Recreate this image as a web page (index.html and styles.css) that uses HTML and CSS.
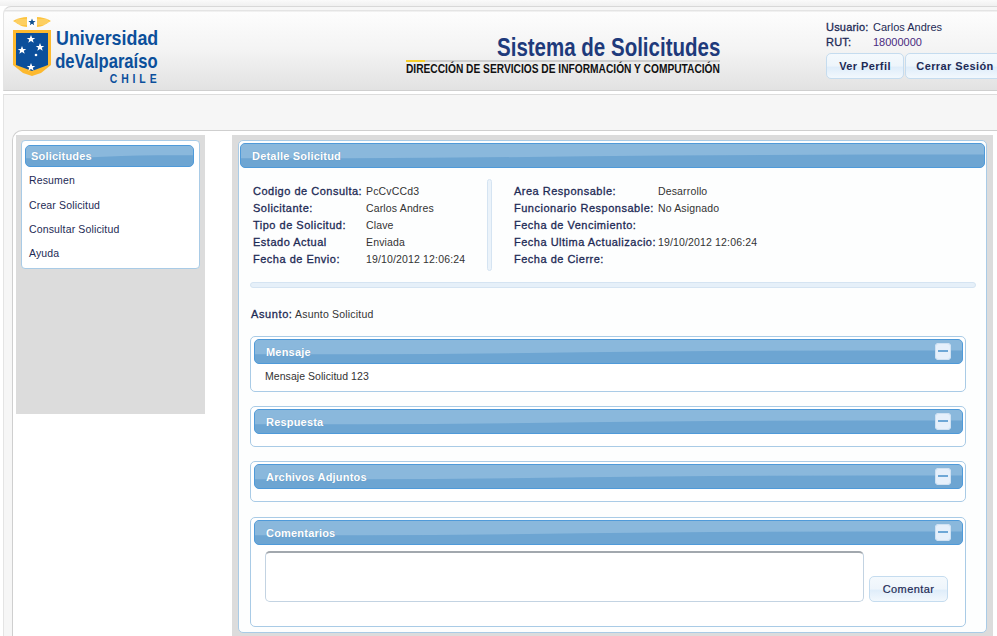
FILE: index.html
```html
<!DOCTYPE html>
<html lang="es">
<head>
    <meta charset="UTF-8">
    <title>Sistema de Solicitudes</title>
    <link rel="stylesheet" href="styles.css">
</head>
<body>

<svg class="defs" width="0" height="0">
    <symbol id="wave" viewBox="0 0 700 26" preserveAspectRatio="none">
        <path d="M0 0H700V12C600 12 500 12 400 13C300 14 200 16 100 16C60 16 30 16 0 16Z" fill="#8ab8dc"/>
    </symbol>
</svg>

<header class="header">
    <div class="logo">
        <svg class="escudo" width="38" height="62" viewBox="0 0 38 62">
            <g fill="#fdc43f">
                <path d="M0 5C5 2 10 1 14 1V11C9 11 5 8 0 5Z"/>
                <path d="M38 5C33 2 28 1 24 1V11C29 11 33 8 38 5Z"/>
            </g>
            <g stroke="#fff2c8" stroke-width=".5">
                <path d="M3 4H14M2 6H14M5 8H14"/>
                <path d="M24 4H35M24 6H36M24 8H33"/>
            </g>
            <circle cx="19" cy="6" r="5" fill="#fff"/>
            <path d="M19 2.5L20 5.1H22.6L20.5 6.7L21.2 9.3L19 7.8L16.8 9.3L17.5 6.7L15.4 5.1H18Z" fill="#10508f"/>
            <path d="M0 14H38V49L28 57L19 60L10 57L0 49Z" fill="#fdb92e"/>
            <path d="M3 17H35V49L19 55L3 49Z" fill="#0b4f9b"/>
            <g fill="#fff">
                <path d="M18 19L19.2 21.9H22.3L19.8 23.8L20.7 26.8L18 25L15.3 26.8L16.2 23.8L13.7 21.9H16.8Z"/>
                <path d="M9 30L10.2 32.9H13.3L10.8 34.8L11.7 37.8L9 36L6.3 37.8L7.2 34.8L4.7 32.9H7.8Z"/>
                <path d="M27 27L28.2 29.9H31.3L28.8 31.8L29.7 34.8L27 33L24.3 34.8L25.2 31.8L22.7 29.9H25.8Z"/>
                <path d="M18 47L19.2 49.9H22.3L19.8 51.8L20.7 54.8L18 53L15.3 54.8L16.2 51.8L13.7 49.9H16.8Z"/>
                <circle cx="23" cy="39" r="1.3"/>
            </g>
        </svg>
        <div class="logo-text">
            <div class="logo-line"><span class="logo-u">Universidad</span></div>
            <div class="logo-line"><span class="logo-d">deValparaíso</span></div>
            <div class="logo-chile"><span>CHILE</span></div>
        </div>
    </div>
    <div class="titulo">
        <h1><span>Sistema de Solicitudes</span></h1>
        <div class="subtitulo"><span>DIRECCIÓN DE SERVICIOS DE INFORMACIÓN Y COMPUTACIÓN</span></div>
    </div>
    <div class="usuario">
        <div class="usuario-fila"><b>Usuario:</b><span>Carlos Andres</span></div>
        <div class="usuario-fila"><b>RUT:</b><span class="rut">18000000</span></div>
        <div class="usuario-botones">
            <button type="button" class="boton">Ver Perfil</button>
            <button type="button" class="boton boton-sesion">Cerrar Sesión</button>
        </div>
    </div>
</header>

<div class="cuerpo">
    <div class="franja"></div>

    <div class="contenido">
        <aside class="lateral">
            <div class="menu">
                <div class="barra barra-menu">
                    <svg class="wave"><use href="#wave"/></svg>
                    <span>Solicitudes</span>
                </div>
                <a href="#">Resumen</a>
                <a href="#">Crear Solicitud</a>
                <a href="#">Consultar Solicitud</a>
                <a href="#">Ayuda</a>
            </div>
        </aside>

        <main class="principal">
            <div class="panel">
                <div class="barra barra-detalle">
                    <svg class="wave"><use href="#wave"/></svg>
                    <span>Detalle Solicitud</span>
                </div>

                <div class="datos">
                    <dl class="datos-col col-izq">
                        <dt>Codigo de Consulta:</dt><dd>PcCvCCd3</dd>
                        <dt>Solicitante:</dt><dd>Carlos Andres</dd>
                        <dt>Tipo de Solicitud:</dt><dd>Clave</dd>
                        <dt>Estado Actual</dt><dd>Enviada</dd>
                        <dt>Fecha de Envio:</dt><dd>19/10/2012 12:06:24</dd>
                    </dl>
                    <div class="divisor"></div>
                    <dl class="datos-col col-der">
                        <dt>Area Responsable:</dt><dd>Desarrollo</dd>
                        <dt>Funcionario Responsable:</dt><dd>No Asignado</dd>
                        <dt>Fecha de Vencimiento:</dt><dd></dd>
                        <dt>Fecha Ultima Actualizacio:</dt><dd>19/10/2012 12:06:24</dd>
                        <dt>Fecha de Cierre:</dt><dd></dd>
                    </dl>
                </div>

                <div class="separador"></div>

                <p class="asunto"><b>Asunto:</b> Asunto Solicitud</p>

                <section class="caja caja-mensaje">
                    <div class="barra">
                        <svg class="wave"><use href="#wave"/></svg>
                        <span>Mensaje</span>
                        <i class="menos"></i>
                    </div>
                    <p class="caja-texto">Mensaje Solicitud 123</p>
                </section>

                <section class="caja caja-vacia">
                    <div class="barra">
                        <svg class="wave"><use href="#wave"/></svg>
                        <span>Respuesta</span>
                        <i class="menos"></i>
                    </div>
                </section>

                <section class="caja caja-vacia">
                    <div class="barra">
                        <svg class="wave"><use href="#wave"/></svg>
                        <span>Archivos Adjuntos</span>
                        <i class="menos"></i>
                    </div>
                </section>

                <section class="caja caja-comentarios">
                    <div class="barra">
                        <svg class="wave"><use href="#wave"/></svg>
                        <span>Comentarios</span>
                        <i class="menos"></i>
                    </div>
                    <form class="comentar">
                        <textarea></textarea>
                        <button type="button" class="boton boton-comentar">Comentar</button>
                    </form>
                </section>
            </div>
        </main>
    </div>
</div>

</body>
</html>
```

FILE: styles.css
```css
* {
    box-sizing: border-box;
}

html, body {
    height: 636px;
    overflow: hidden;
}

body {
    margin: 0;
    padding-top: 6px;
    font-family: "Liberation Sans", Arial, sans-serif;
    font-size: 11px;
    color: #1d2a55;
    background: linear-gradient(#fafafa, #f0f0f0 6px, #fff 6px);
}

.defs {
    display: block;
}

/* Cabecera */
.header {
    display: flex;
    height: 85px;
    margin-left: 3px;
    border-top: 1px solid #d8d8d8;
    border-bottom: 1px solid #cfcfcf;
    border-left: 1px solid #e4e4e4;
    border-top-left-radius: 8px;
    background: linear-gradient(#f6f6f6 0, #f6f6f6 3px, #e4e4e4 3px, #e4e4e4 4px, #fdfdfd 5px, #f4f4f4 50%, #e2e2e2 100%);
}

.logo {
    display: flex;
    width: 145px;
    margin-left: 9px;
    padding-top: 9px;
    flex: none;
}

.escudo {
    flex: none;
}

.logo-text {
    width: 102px;
    margin-left: 5px;
    padding-top: 10px;
    color: #0b4f9b;
    font-weight: 700;
}

.logo-line,
.logo-chile,
.titulo h1,
.subtitulo {
    display: flex;
    justify-content: flex-end;
    white-space: nowrap;
}

.logo-line {
    height: 23px;
    font-size: 21px;
    line-height: 23px;
}

.logo-line span,
.logo-chile span,
.titulo h1 span,
.subtitulo span {
    flex: none;
    transform-origin: right center;
}

.logo-u {
    transform: scaleX(.85);
}

.logo-d {
    transform: scaleX(.79);
}

.logo-chile {
    margin-right: -2px;
    font-size: 13px;
    line-height: 13px;
    letter-spacing: 4.9px;
}

.logo-chile span {
    transform: scaleX(.8);
}

.titulo {
    width: 314px;
    margin-left: 248px;
    padding-top: 27px;
    flex: none;
    font-weight: 700;
}

.titulo h1 {
    margin: 0;
    font-size: 25px;
    line-height: 26px;
    color: #1e3a7b;
}

.titulo h1 span {
    transform: scaleX(.82);
}

.subtitulo {
    height: 17px;
    font-size: 13px;
    line-height: 18px;
    color: #111;
    background: linear-gradient(90deg, #f6cf2c 19px, #cfcfcf 19px) top left / 100% 2px no-repeat;
}

.subtitulo span {
    transform: scaleX(.785);
}

.usuario {
    margin-left: 106px;
    padding-top: 13px;
    flex: none;
    width: 180px;
}

.usuario-fila {
    display: flex;
    height: 15px;
    line-height: 15px;
    font-size: 11px;
}

.usuario-fila b {
    width: 47px;
    font-weight: 400;
    -webkit-text-stroke: .3px #1d2a55;
    letter-spacing: .2px;
}

.rut {
    color: #4a2a80;
}

.usuario-botones {
    display: flex;
    gap: 1px;
    margin-top: 3px;
}

.boton {
    height: 26px;
    padding: 0;
    border: 1px solid #c5dcef;
    border-radius: 5px;
    background: linear-gradient(#f4f9fd 0, #eef5fb 50%, #dfedfa 55%, #f2f8fd 100%);
    color: #1d2a55;
    font-family: "Liberation Sans", Arial, sans-serif;
    font-size: 11px;
    font-weight: 700;
    letter-spacing: .4px;
    cursor: pointer;
}

.usuario-botones .boton {
    width: 78px;
}

.usuario-botones .boton-sesion {
    width: 100px;
}

/* Zona bajo la cabecera */
.cuerpo {
    margin-top: 3px;
    margin-left: 3px;
    border-top: 1px solid #dcdcdc;
    border-left: 1px solid #e4e4e4;
    background-color: #f6f6f6;
}

.franja {
    height: 35px;
}

/* Contenido */
.contenido {
    display: flex;
    height: 510px;
    margin-left: 8px;
    padding: 4px 0 0 3px;
    border-top: 1px solid #cfcfcf;
    border-left: 1px solid #cfcfcf;
    border-top-left-radius: 10px;
    background-color: #fff;
}

.lateral {
    width: 189px;
    height: 279px;
    padding: 5px 5px 0;
    flex: none;
    background-color: #dcdcdc;
}

.menu {
    height: 129px;
    padding: 4px 5px 0 3px;
    border: 1px solid #a9cbe6;
    border-radius: 4px;
    background-color: #fff;
}

.menu a {
    display: block;
    height: 24.4px;
    padding-left: 4px;
    line-height: 24px;
    color: #1d2a55;
    text-decoration: none;
    font-size: 10.5px;
    letter-spacing: .15px;
}

.barra {
    position: relative;
    display: flex;
    align-items: center;
    height: 25px;
    padding: 0 11px;
    overflow: hidden;
    border: 1px solid #4f9ad9;
    border-radius: 5px;
    background-color: #6da5d2;
    color: #fff;
    font-weight: 700;
    letter-spacing: .2px;
}

.barra span {
    position: relative;
    text-shadow: 0 0 1px #5c8fba;
}

.wave {
    position: absolute;
    top: 0;
    left: 0;
    width: 100%;
    height: 100%;
}

.barra-menu {
    height: 22px;
    margin-bottom: 1.2px;
    padding: 0 5px;
}

.principal {
    width: 761px;
    height: 505px;
    margin-left: 27px;
    padding: 5px 6px 0;
    flex: none;
    background-color: #dcdcdc;
}

.panel {
    height: 493px;
    padding: 2px 1px 0;
    border: 1px solid #a9cbe6;
    border-radius: 5px;
    background-color: #fdfefe;
}

.datos {
    display: flex;
    height: 114px;
    padding: 12px 0 0 13px;
}

.datos-col {
    display: grid;
    grid-auto-rows: 17px;
    align-content: start;
    margin: 3px 0 0;
    line-height: 17px;
    font-size: 10.5px;
}

.col-izq {
    grid-template-columns: 113px 120px;
    width: 234px;
}

.col-der {
    grid-template-columns: 144px 140px;
    margin-left: 22px;
}

.datos-col dt {
    font-size: 11px;
    color: #1d2a55;
    -webkit-text-stroke: .3px #1d2a55;
    white-space: nowrap;
    letter-spacing: .5px;
}

.datos-col dd {
    margin: 0;
    color: #333;
    white-space: nowrap;
    letter-spacing: .15px;
}

.divisor {
    width: 5px;
    height: 92px;
    flex: none;
    margin-top: -1px;
    border: 1px solid #d5e4f2;
    border-radius: 3px;
    background-color: #ebf3fa;
}

.separador {
    height: 6px;
    margin: 0 9px 0 10px;
    border: 1px solid #d5e4f2;
    border-radius: 3px;
    background-color: #e6f0f9;
}

.asunto {
    height: 48px;
    margin: 0;
    padding: 19px 0 0 11px;
    line-height: 14px;
    font-size: 10.5px;
    letter-spacing: .2px;
    color: #333;
}

.asunto b {
    font-weight: 400;
    font-size: 11px;
    letter-spacing: .6px;
    color: #1d2a55;
    -webkit-text-stroke: .3px #1d2a55;
}

.caja {
    margin: 0 19px 14px 10px;
    padding: 2px 2px 0 3px;
    border: 1px solid #a9cbe6;
    border-radius: 5px;
    background-color: #fff;
}

.caja-mensaje {
    height: 56px;
}

.caja-vacia {
    height: 41px;
}

.caja-comentarios {
    height: 110px;
    margin-top: 15px;
}

.caja-texto {
    margin: 0;
    padding: 5px 0 0 11px;
    line-height: 14px;
    font-size: 10.5px;
    letter-spacing: .05px;
    color: #333;
}

.menos {
    position: relative;
    width: 16px;
    height: 17px;
    margin-left: auto;
    border-radius: 4px;
    background-color: #e6f0fb;
    box-shadow: 0 0 0 1px #cfe1f2 inset;
}

.menos::after {
    content: "";
    position: absolute;
    top: 7px;
    left: 3px;
    width: 10px;
    height: 2px;
    background-color: #6ea7d6;
}

.comentar {
    display: flex;
    align-items: flex-end;
    padding: 6px 0 0 11px;
}

.comentar textarea {
    width: 599px;
    height: 51px;
    border: 1px solid #c3d3e2;
    border-top: 2px solid #a2a8ae;
    border-radius: 5px;
    background-color: #fff;
    resize: none;
}

.boton-comentar {
    width: 79px;
    margin-left: 5px;
    font-weight: 400;
    -webkit-text-stroke: .2px #1d2a55;
}
```
